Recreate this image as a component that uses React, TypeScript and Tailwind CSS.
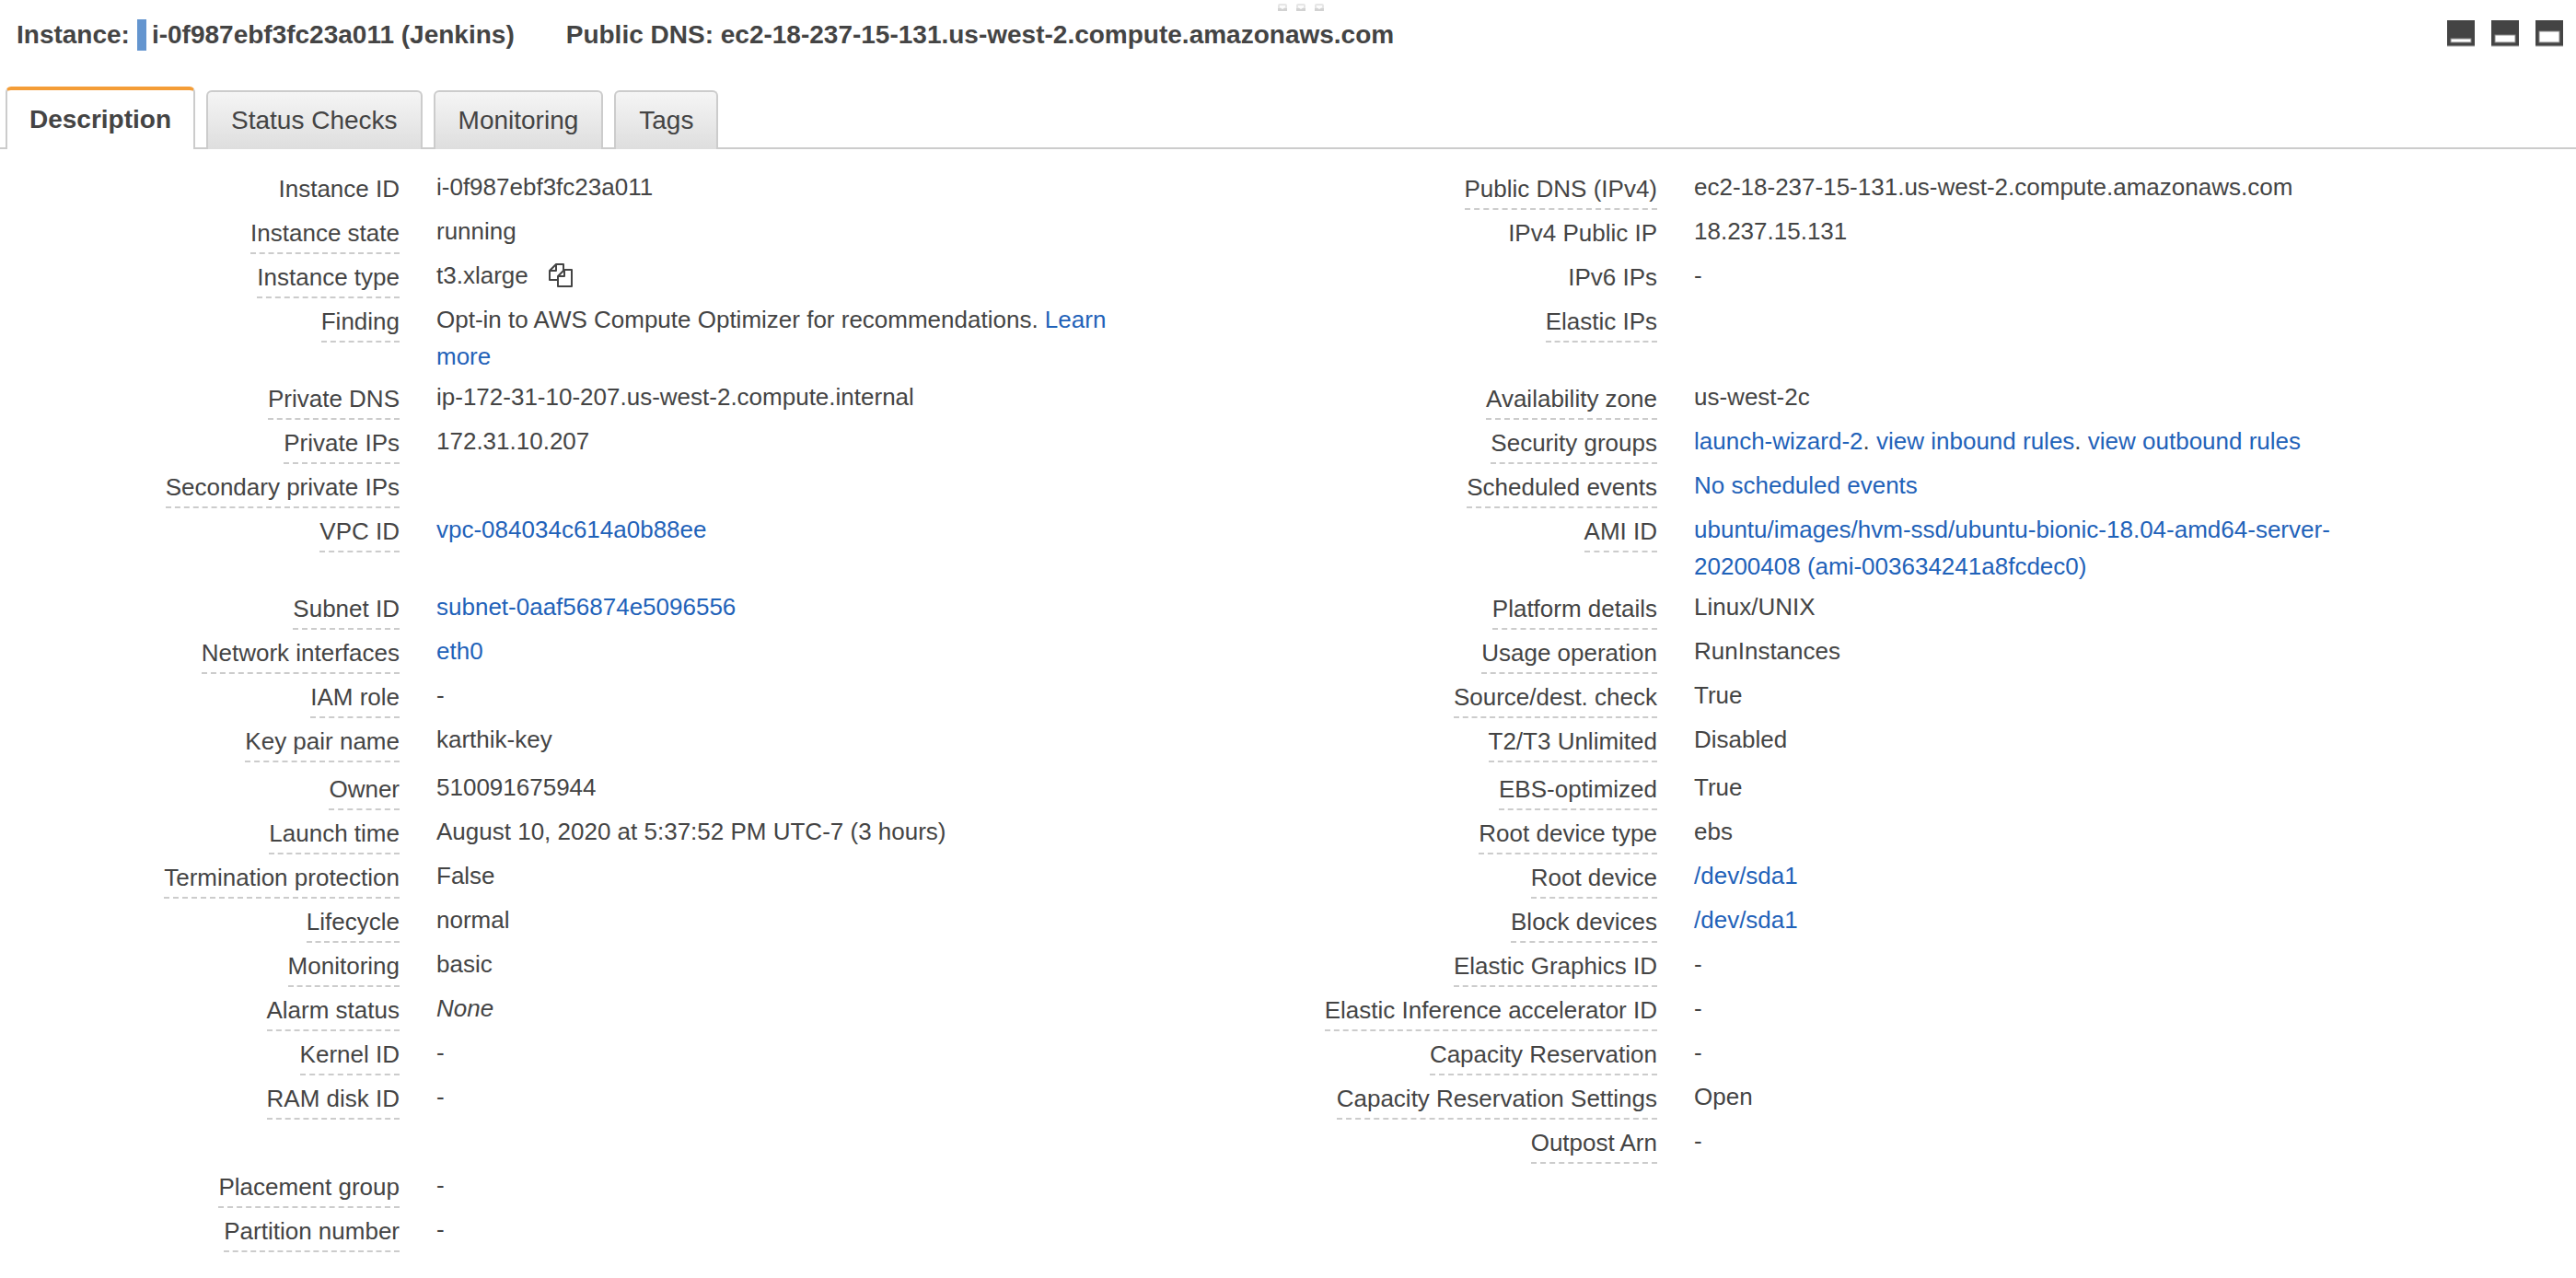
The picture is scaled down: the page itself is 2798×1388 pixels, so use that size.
import type { ReactNode } from "react";

type Field = {
  label: string;
  value?: ReactNode;
  plain?: boolean;
};

function Link({ children }: { children: ReactNode }) {
  return (
    <a href="#" className="text-[#1f62b9] hover:underline">
      {children}
    </a>
  );
}

function CopyIcon() {
  return (
    <svg viewBox="0 0 26 26" className="size-[26px]" fill="#fff" stroke="#444" strokeWidth="2" strokeLinejoin="round">
      <path d="M8 1H16V18H1V8Z" />
      <path d="M8 1V8H1" fill="none" />
      <path d="M17 7H25V25H10V14Z" />
      <path d="M17 7V14H10" fill="none" />
    </svg>
  );
}

const rows: { left?: Field; right?: Field; tall?: boolean }[] = [
  {
    left: { label: "Instance ID", value: "i-0f987ebf3fc23a011", plain: true },
    right: { label: "Public DNS (IPv4)", value: "ec2-18-237-15-131.us-west-2.compute.amazonaws.com" },
  },
  {
    left: { label: "Instance state", value: "running" },
    right: { label: "IPv4 Public IP", value: "18.237.15.131", plain: true },
  },
  {
    left: {
      label: "Instance type",
      value: (
        <span className="flex items-center gap-[22px]">
          t3.xlarge
          <button type="button" aria-label="Copy instance type">
            <CopyIcon />
          </button>
        </span>
      ),
    },
    right: { label: "IPv6 IPs", value: "-", plain: true },
  },
  {
    left: {
      label: "Finding",
      value: (
        <>
          Opt-in to AWS Compute Optimizer for recommendations. <Link>Learn more</Link>
        </>
      ),
    },
    right: { label: "Elastic IPs" },
  },
  {
    left: { label: "Private DNS", value: "ip-172-31-10-207.us-west-2.compute.internal" },
    right: { label: "Availability zone", value: "us-west-2c" },
  },
  {
    left: { label: "Private IPs", value: "172.31.10.207" },
    right: {
      label: "Security groups",
      value: (
        <>
          <Link>launch-wizard-2</Link>. <Link>view inbound rules</Link>. <Link>view outbound rules</Link>
        </>
      ),
    },
  },
  {
    left: { label: "Secondary private IPs" },
    right: { label: "Scheduled events", value: <Link>No scheduled events</Link> },
  },
  {
    left: { label: "VPC ID", value: <Link>vpc-084034c614a0b88ee</Link> },
    right: {
      label: "AMI ID",
      value: <Link>ubuntu/images/hvm-ssd/ubuntu-bionic-18.04-amd64-server-20200408 (ami-003634241a8fcdec0)</Link>,
    },
  },
  {
    left: { label: "Subnet ID", value: <Link>subnet-0aaf56874e5096556</Link> },
    right: { label: "Platform details", value: "Linux/UNIX" },
  },
  {
    left: { label: "Network interfaces", value: <Link>eth0</Link> },
    right: { label: "Usage operation", value: "RunInstances" },
  },
  {
    left: { label: "IAM role", value: "-" },
    right: { label: "Source/dest. check", value: "True" },
  },
  {
    left: { label: "Key pair name", value: "karthik-key" },
    right: { label: "T2/T3 Unlimited", value: "Disabled" },
    tall: true,
  },
  {
    left: { label: "Owner", value: "510091675944" },
    right: { label: "EBS-optimized", value: "True" },
  },
  {
    left: { label: "Launch time", value: "August 10, 2020 at 5:37:52 PM UTC-7 (3 hours)" },
    right: { label: "Root device type", value: "ebs" },
  },
  {
    left: { label: "Termination protection", value: "False" },
    right: { label: "Root device", value: <Link>/dev/sda1</Link> },
  },
  {
    left: { label: "Lifecycle", value: "normal" },
    right: { label: "Block devices", value: <Link>/dev/sda1</Link> },
  },
  {
    left: { label: "Monitoring", value: "basic" },
    right: { label: "Elastic Graphics ID", value: "-" },
  },
  {
    left: { label: "Alarm status", value: <em>None</em> },
    right: { label: "Elastic Inference accelerator ID", value: "-" },
  },
  {
    left: { label: "Kernel ID", value: "-" },
    right: { label: "Capacity Reservation", value: "-" },
  },
  {
    left: { label: "RAM disk ID", value: "-" },
    right: { label: "Capacity Reservation Settings", value: "Open" },
  },
  { right: { label: "Outpost Arn", value: "-" } },
  { left: { label: "Placement group", value: "-" } },
  { left: { label: "Partition number", value: "-" } },
];

function Cells({ field }: { field?: Field }) {
  if (!field) {
    return (
      <>
        <div />
        <div />
      </>
    );
  }
  return (
    <>
      <dt className="flex items-start justify-end pt-[3px]">
        <span
          className={
            field.plain
              ? "border-b-2 border-transparent pb-px"
              : "border-b-2 border-dashed border-[#ccc] pb-px"
          }
        >
          {field.label}
        </span>
      </dt>
      <dd className="max-w-[800px] pt-px pb-[3px] pl-10">{field.value}</dd>
    </>
  );
}

function Tab({ label, active }: { label: string; active?: boolean }) {
  return (
    <button
      type="button"
      role="tab"
      aria-selected={!!active}
      className={
        active
          ? "h-[68px] rounded-t-md border-x-2 border-t-4 border-x-[#ccc] border-t-[#f49d37] bg-white px-6 font-bold"
          : "h-16 rounded-t-md border-2 border-b-0 border-[#ccc] bg-linear-to-b from-[#f5f5f5] to-[#dedede] px-[25px]"
      }
    >
      {label}
    </button>
  );
}

function PaneButton({ label, y }: { label: string; y: number }) {
  return (
    <button type="button" aria-label={label}>
      <svg viewBox="0 0 30 29" className="h-[29px] w-[30px]">
        <rect width="30" height="29" fill="#ccc" />
        <rect width="30" height="28" fill="#777" />
        <rect width="30" height="27" fill="#444" />
        <rect x="4" y={y} width="22" height={24 - y} fill="#fff" stroke="#888" strokeWidth="1" />
      </svg>
    </button>
  );
}

function ResizeGrip() {
  return (
    <svg viewBox="0 0 50 8" className="h-2 w-[50px]">
      {[0, 20, 40].map((x) => (
        <g key={x}>
          <rect x={x} width="10" height="8" rx="2" fill="#e6e6e6" />
          <rect x={x} y="5" width="10" height="3" fill="#d2d2d2" />
          <path d={`M${x + 2} 2H${x + 8}V4L${x + 5} 6L${x + 2} 4Z`} fill="#fcfcfc" />
        </g>
      ))}
    </svg>
  );
}

export default function App() {
  return (
    <main className="bg-white font-['Liberation_Sans',Arial,sans-serif] text-[26px] leading-10 text-[#444]">
      <div className="flex h-3 justify-center pt-1 pl-7">
        <ResizeGrip />
      </div>
      <header className="flex h-[82px] items-start justify-between pt-1.5 pr-3.5 pl-[18px] font-bold">
        <h1 className="flex items-center text-[28px]">
          Instance:
          <span className="mr-1.5 ml-2 h-[34px] w-2.5 bg-[#6495cf]" />
          <span>i-0f987ebf3fc23a011 (Jenkins)</span>
          <span className="ml-14">Public DNS: ec2-18-237-15-131.us-west-2.compute.amazonaws.com</span>
        </h1>
        <div className="flex gap-[18px] pt-1">
          <PaneButton label="Minimize pane" y={20} />
          <PaneButton label="Half-height pane" y={16} />
          <PaneButton label="Full-height pane" y={12} />
        </div>
      </header>
      <div role="tablist" className="flex items-end border-b-2 border-[#ccc] pl-1.5 text-[28px]">
        <div className="-mb-0.5 flex items-end gap-3">
          <Tab label="Description" active />
          <Tab label="Status Checks" />
          <Tab label="Monitoring" />
          <Tab label="Tags" />
        </div>
      </div>
      <dl className="pt-5 pb-4">
        {rows.map((row, i) => (
          <div
            key={i}
            className={
              row.tall
                ? "grid min-h-[52px] grid-cols-[434fr_932fr_434fr_998fr]"
                : "grid min-h-12 grid-cols-[434fr_932fr_434fr_998fr]"
            }
          >
            <Cells field={row.left} />
            <Cells field={row.right} />
          </div>
        ))}
      </dl>
    </main>
  );
}
